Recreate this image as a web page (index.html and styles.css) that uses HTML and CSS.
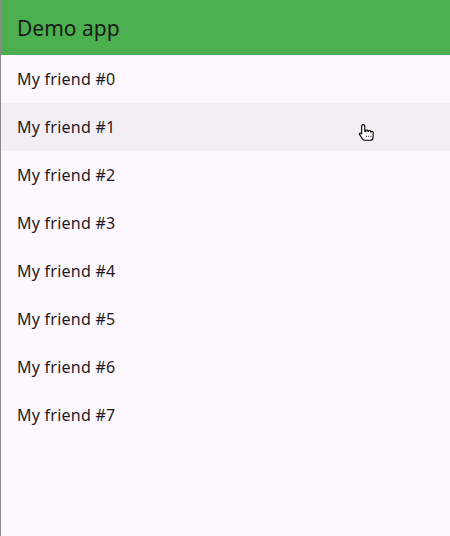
FILE: index.html
```html
<!DOCTYPE html>
<html>
<head>
<meta charset="utf-8">
<link rel="stylesheet" href="styles.css">
</head>
<body>
<div class="app">
  <header class="appbar">Demo app</header>
  <ul class="list">
    <li class="item">My friend #0</li>
    <li class="item hover">My friend #1</li>
    <li class="item">My friend #2</li>
    <li class="item">My friend #3</li>
    <li class="item">My friend #4</li>
    <li class="item">My friend #5</li>
    <li class="item">My friend #6</li>
    <li class="item">My friend #7</li>
  </ul>
  <svg class="cursor" width="20" height="20" viewBox="0 0 18 18">
    <path d="M5.5 1.5 C6.3 1.5 7 2 7 2.8 V7.5 H8 V6.8 C8 6.2 9.8 6.2 9.8 6.8 V7.5 H10.4 V7.2 C10.4 6.6 12.2 6.6 12.2 7.2 V8 H12.8 C12.8 7.5 14.5 7.5 14.5 8.2 V12.5 C14.5 14 13.5 15.5 12 15.5 H7 C5.8 15.5 5 14.6 4.4 13.6 L2.3 10.2 C1.8 9.4 2.9 8.6 3.6 9.2 L4.2 9.9 V2.8 C4.2 2 4.8 1.5 5.5 1.5 Z" fill="#fff" stroke="#000" stroke-width="1" stroke-linejoin="round"/>
    <path d="M8.5 11.5 V13.5 M10.5 11.5 V13.5 M12.5 11.5 V13.5" stroke="#000" stroke-width="0.8" stroke-dasharray="1 1"/>
  </svg>
</div>
</body>
</html>
```
FILE: styles.css
```css
html, body {
  margin: 0;
  padding: 0;
}
body {
  width: 450px;
  height: 536px;
  overflow: hidden;
  background: #fef7ff;
  font-family: "Noto Sans", "DejaVu Sans", sans-serif;
  color: #1d1b20;
}
.app {
  position: relative;
  height: 536px;
  border-left: 1px solid #8a8a8a;
  box-sizing: border-box;
  background: #fef7ff;
}
.appbar {
  height: 55px;
  background: #4caf50;
  display: flex;
  align-items: center;
  padding-left: 16px;
  font-size: 21px;
  color: #1a1c19;
}
.list {
  list-style: none;
  margin: 0;
  padding: 0;
}
.item {
  height: 48px;
  display: flex;
  align-items: center;
  padding-left: 16px;
  font-size: 16px;
  letter-spacing: 0.25px;
  color: #1d1b20;
}
.item.hover {
  background: #f3edf5;
}
.cursor {
  position: absolute;
  left: 356px;
  top: 123px;
}
```
